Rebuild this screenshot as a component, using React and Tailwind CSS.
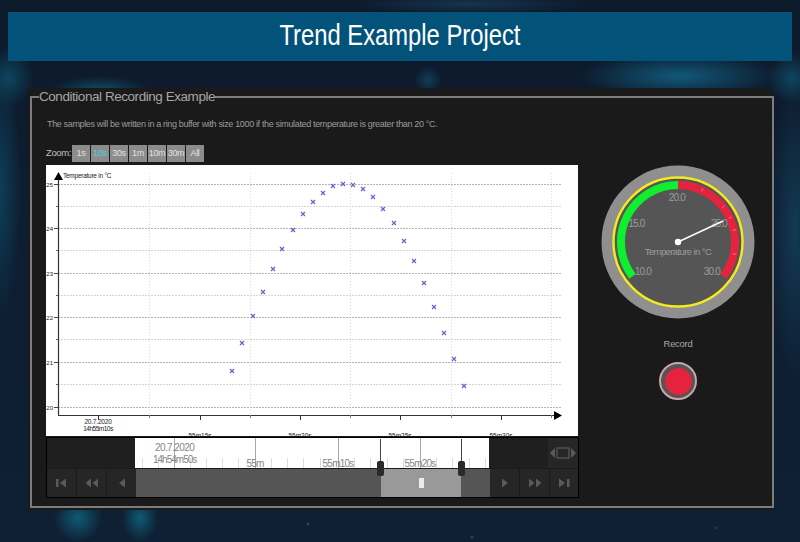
import React from "react";

const FONT = "'Liberation Sans', Arial, sans-serif";
const pts = [[232,371],[242,343],[253,316],[263,292],[273,269],[282,249],[293,230],[303,214],[313,202],[323,193],[333,186],[343,184],[353,185],[363,189],[373,197],[383,209],[394,223],[404,241],[414,261],[424,283],[434,307],[444,333],[454,359],[464,386]];

function Chart() {
  const major = [184,228,273,317,362,407];
  const minor = [206,250,295,339,384];
  const vert = [149,250,350,451,551];
  return (
    <svg width="532" height="271" viewBox="46 165 532 271" className="block">
      <rect x="46" y="165" width="532" height="271" fill="#ffffff" />
      {vert.map(x => <line key={x} x1={x + 0.5} x2={x + 0.5} y1="173" y2="415" stroke="#d8d8d8" strokeWidth="1" strokeDasharray="1 2" />)}
      {major.map(y => <line key={y} x1="58" x2="561" y1={y + 0.5} y2={y + 0.5} stroke="#b4b4b4" strokeWidth="1" strokeDasharray="2 1" />)}
      {minor.map(y => <line key={y} x1="58" x2="561" y1={y + 0.5} y2={y + 0.5} stroke="#d6d6d6" strokeWidth="1" strokeDasharray="2 1" />)}
      {major.map(y => <line key={y} x1="54" x2="58" y1={y + 0.5} y2={y + 0.5} stroke="#444" strokeWidth="1" />)}
      {minor.map(y => <line key={y} x1="56" x2="58" y1={y + 0.5} y2={y + 0.5} stroke="#666" strokeWidth="1" />)}
      <line x1="58.5" x2="58.5" y1="178" y2="415" stroke="#333" strokeWidth="1.2" />
      <line x1="58" x2="556" y1="415.5" y2="415.5" stroke="#333" strokeWidth="1.2" />
      <polygon points="58.5,172 54,180 63,180" fill="#000" />
      <polygon points="562,415.5 554,411 554,420" fill="#000" />
      {[98,200,300,400,501].map(x => <line key={x} x1={x + 0.5} x2={x + 0.5} y1="415" y2="420" stroke="#333" strokeWidth="1" />)}
      {vert.map(x => <line key={x} x1={x + 0.5} x2={x + 0.5} y1="415" y2="418" stroke="#777" strokeWidth="1" />)}
      <g fontFamily={FONT} fontSize="6.5" fill="#222">
        <text x="63" y="178" letterSpacing="-0.25">Temperature in °C</text>
        {["25","24","23","22","21","20"].map((t, i) => <text key={t} x="53" y={major[i] + 2.5} textAnchor="end" fontSize="6">{t}</text>)}
        <text x="98" y="423.5" textAnchor="middle" letterSpacing="-0.2">20.7.2020</text>
        <text x="98" y="431" textAnchor="middle" letterSpacing="-0.5">14h55m10s</text>
        {[[200,"55m15s"],[300,"55m20s"],[400,"55m25s"],[501,"55m30s"]].map(([x,t]) => <text key={t} x={x} y="437.5" textAnchor="middle">{t}</text>)}
      </g>
      {pts.map(([x,y],i) => (
        <path key={i} d={`M${x-2} ${y-2}L${x+2} ${y+2}M${x+2} ${y-2}L${x-2} ${y+2}`} stroke="#6a60d0" strokeWidth="1.2" fill="none" />
      ))}
    </svg>
  );
}

function polar(r, deg) {
  const a = (deg - 90) * Math.PI / 180;
  return [80 + r * Math.cos(a), 80 + r * Math.sin(a)];
}
function arc(r, a0, a1) {
  const [x0, y0] = polar(r, a0), [x1, y1] = polar(r, a1);
  return `M${x0} ${y0}A${r} ${r} 0 ${a1 - a0 > 180 ? 1 : 0} 1 ${x1} ${y1}`;
}

function Gauge() {
  const lbl = [["10.0",45,112.5],["15.0",38.5,64.5],["20.0",79,38.5],["25.0",121,64.5],["30.0",114,112.5]];
  return (
    <svg width="160" height="160" viewBox="0 0 160 160" className="block">
      <circle cx="80" cy="80" r="76.5" fill="#8f8f8f" />
      <circle cx="80" cy="80" r="64.5" fill="#555555" stroke="#f4ea1e" strokeWidth="2.4" />
      <path d={arc(57, -127, 0)} stroke="#10ee30" strokeWidth="8" fill="none" />
      <path d={arc(57, 0, 127)} stroke="#e6233f" strokeWidth="8" fill="none" />
      {[25,52,65,78,102].map(a => {
        const [x0,y0] = polar(56,a), [x1,y1] = polar(59,a);
        return <line key={a} x1={x0} y1={y0} x2={x1} y2={y1} stroke="#f0a0aa" strokeWidth="0.7" />;
      })}
      <g fontFamily={FONT} fontSize="10" fill="#9c9c9c" textAnchor="middle" letterSpacing="-0.8">
        {lbl.map(([t,x,y]) => <text key={t} x={x} y={y}>{t}</text>)}
        <text x="80" y="93" fontSize="9.5" letterSpacing="-0.6">Temperature in °C</text>
      </g>
      <line x1="80" y1="80" x2="125" y2="59" stroke="#ffffff" strokeWidth="1.4" />
      <circle cx="80" cy="80" r="3.2" fill="#ffffff" />
    </svg>
  );
}

function Ico({ kind }) {
  const c = "#5a5a5a";
  const shapes = {
    first: <><rect x="1" y="2" width="2.5" height="8" fill={c}/><polygon points="11,1.5 5,6 11,10.5" fill={c}/></>,
    prev2: <><polygon points="6,1.5 0.5,6 6,10.5" fill={c}/><polygon points="13,1.5 7.5,6 13,10.5" fill={c}/></>,
    prev: <polygon points="10,1.5 4,6 10,10.5" fill={c}/>,
    next: <polygon points="4,1.5 10,6 4,10.5" fill={c}/>,
    next2: <><polygon points="1,1.5 6.5,6 1,10.5" fill={c}/><polygon points="8,1.5 13.5,6 8,10.5" fill={c}/></>,
    last: <><polygon points="2,1.5 8,6 2,10.5" fill={c}/><rect x="10" y="2" width="2.5" height="8" fill={c}/></>,
  };
  return <svg width="14" height="12" viewBox="0 0 14 12">{shapes[kind]}</svg>;
}

function NavBtn({ kind }) {
  return <div className="flex w-[30px] items-center justify-center border-r border-[#1a1a1a] bg-[#262626]"><Ico kind={kind} /></div>;
}

function Timeline() {
  const minor = [142,158,190,206,222,238,271,287,303,320,354,370,387,403,436,452,469,485];
  const major = [174,255,338,420];
  return (
    <svg width="354" height="30" viewBox="135 438 354 30" className="block">
      <rect x="135" y="438" width="354" height="30" fill="#fff" />
      {minor.map(x => <line key={x} x1={x + 0.5} x2={x + 0.5} y1="458" y2="468" stroke="#dcdcdc" />)}
      {major.map(x => <line key={x} x1={x + 0.5} x2={x + 0.5} y1="438" y2="468" stroke="#a8a8a8" />)}
      <g fontFamily={FONT} fontSize="10" fill="#858585">
        <text x="155" y="450.5" letterSpacing="-0.6">20.7.2020</text>
        <text x="153" y="463" letterSpacing="-1">14h54m50s</text>
        <text x="255" y="467" textAnchor="middle" letterSpacing="-0.8">55m</text>
        <text x="338" y="467" textAnchor="middle" letterSpacing="-0.8">55m10s</text>
        <text x="420" y="467" textAnchor="middle" letterSpacing="-0.8">55m20s</text>
      </g>
    </svg>
  );
}

function Navigator() {
  return (
    <div className="relative flex h-[61px] w-[533px] flex-col border border-black bg-[#1f1f1f]">
      <div className="flex h-[30px]">
        <div className="w-[88px] bg-[#1f1f1f]" />
        <Timeline />
        <div className="flex flex-1 justify-end">
          <div className="flex w-[30px] items-center justify-center bg-[#262626]">
            <svg width="26" height="14" viewBox="0 0 26 14">
              <polygon points="0,7 5,2 5,12" fill="#5a5a5a" />
              <polygon points="26,7 21,2 21,12" fill="#5a5a5a" />
              <rect x="7" y="2" width="12" height="10" fill="none" stroke="#5a5a5a" strokeWidth="1.2" />
            </svg>
          </div>
        </div>
      </div>
      <div className="flex flex-1 border-t border-[#1a1a1a]">
        <NavBtn kind="first" /><NavBtn kind="prev2" />
        <div className="flex w-[29px] items-center justify-center bg-[#262626]"><Ico kind="prev" /></div>
        <div className="flex w-[354px] bg-[#555555]">
          <div className="w-[245px]" />
          <div className="flex w-[80px] items-center justify-center bg-[#999999]">
            <div className="h-[10px] w-[5px] bg-[#ececec]" />
          </div>
        </div>
        <NavBtn kind="next" /><NavBtn kind="next2" />
        <div className="flex flex-1 items-center justify-center bg-[#262626]"><Ico kind="last" /></div>
      </div>
      <div className="absolute left-[333px] top-[1px] h-[30px] w-px bg-[#444]" />
      <div className="absolute left-[330px] top-[23px] h-[15px] w-[7px] rounded-[2px] bg-[#2a2a2a]" />
      <div className="absolute left-[414px] top-[1px] h-[30px] w-px bg-[#444]" />
      <div className="absolute left-[411px] top-[23px] h-[15px] w-[7px] rounded-[2px] bg-[#2a2a2a]" />
    </div>
  );
}

const zooms = ["1s","10s","30s","1m","10m","30m","All"];

export default function App() {
  return (
    <div
      className="flex h-[542px] w-[800px] flex-col overflow-hidden bg-[radial-gradient(circle_2px_at_308px_524px,#2a5a80,transparent),radial-gradient(circle_2px_at_472px_537px,#2a5a80,transparent),radial-gradient(circle_2px_at_716px_528px,#24486a,transparent),radial-gradient(ellipse_24px_24px_at_78px_518px,#0f5a74,transparent),radial-gradient(ellipse_18px_24px_at_140px_518px,#0f5a74,transparent),radial-gradient(ellipse_50px_14px_at_100px_90px,#0f4a62,transparent),radial-gradient(ellipse_14px_14px_at_428px_80px,#123c58,transparent),radial-gradient(ellipse_22px_130px_at_0px_190px,#0d3f58,transparent),radial-gradient(ellipse_26px_150px_at_795px_230px,#123a55,transparent),radial-gradient(ellipse_100px_24px_at_680px_76px,#11587a,transparent),radial-gradient(ellipse_26px_30px_at_8px_78px,#0e4660,transparent),radial-gradient(ellipse_24px_26px_at_792px_78px,#0e4660,transparent),radial-gradient(ellipse_120px_10px_at_470px_4px,#17344e,transparent),linear-gradient(#0d1a2c,#0f2034)] pt-3"
      style={{ fontFamily: FONT }}
    >
      <header className="mx-2 flex h-[49px] items-center justify-center bg-[#03527a]">
        <h1 className="-mt-0.5 scale-x-[0.82] whitespace-nowrap text-[29px] leading-none text-white">Trend Example Project</h1>
      </header>
      <div className="mx-7 mt-[27px] h-[422px] bg-[#1a1a1a] px-0.5">
        <fieldset className="h-[420px] border-2 border-[#7d7d7d] px-[14px]">
          <legend className="-ml-[7px] text-[13.5px] leading-[18px] tracking-[-0.45px] text-[#a6a6a6]">Conditional Recording Example</legend>
          <p className="mt-3 ml-px text-[9px] leading-3 tracking-[-0.35px] text-[#9a9a9a]">The samples will be written in a ring buffer with size 1000 if the simulated temperature is greater than 20 °C.</p>
          <div className="mt-[15px] flex h-[17px] items-center gap-px">
            <span className="mr-px w-6 text-[9.5px] tracking-[-0.4px] text-[#c0c0c0]">Zoom:</span>
            {zooms.map((z, i) => (
              <button key={z} className={`flex h-[17px] w-[18px] items-center justify-center bg-[#8c8c8c] text-[9px] tracking-[-0.3px] ${i === 1 ? "text-[#4fd0e0]" : "text-[#e0e0e0]"}`}>{z}</button>
            ))}
          </div>
          <div className="mt-[3px] flex">
            <div className="flex w-[533px] flex-col">
              <Chart />
              <div className="mt-px"><Navigator /></div>
            </div>
            <div className="flex flex-1 flex-col items-center">
              <div className="-mt-[3px] ml-[19px]"><Gauge /></div>
              <span className="mt-[16px] ml-[19px] text-[9.5px] leading-3 tracking-[-0.3px] text-[#a6a6a6]">Record</span>
              <button className="mt-[12px] ml-[19px] flex h-[38px] w-[38px] items-center justify-center rounded-full border-2 border-[#c9a5ac] bg-[#555555]">
                <span className="h-[27px] w-[27px] rounded-full bg-[#e6233f]" />
              </button>
            </div>
          </div>
        </fieldset>
      </div>
    </div>
  );
}
